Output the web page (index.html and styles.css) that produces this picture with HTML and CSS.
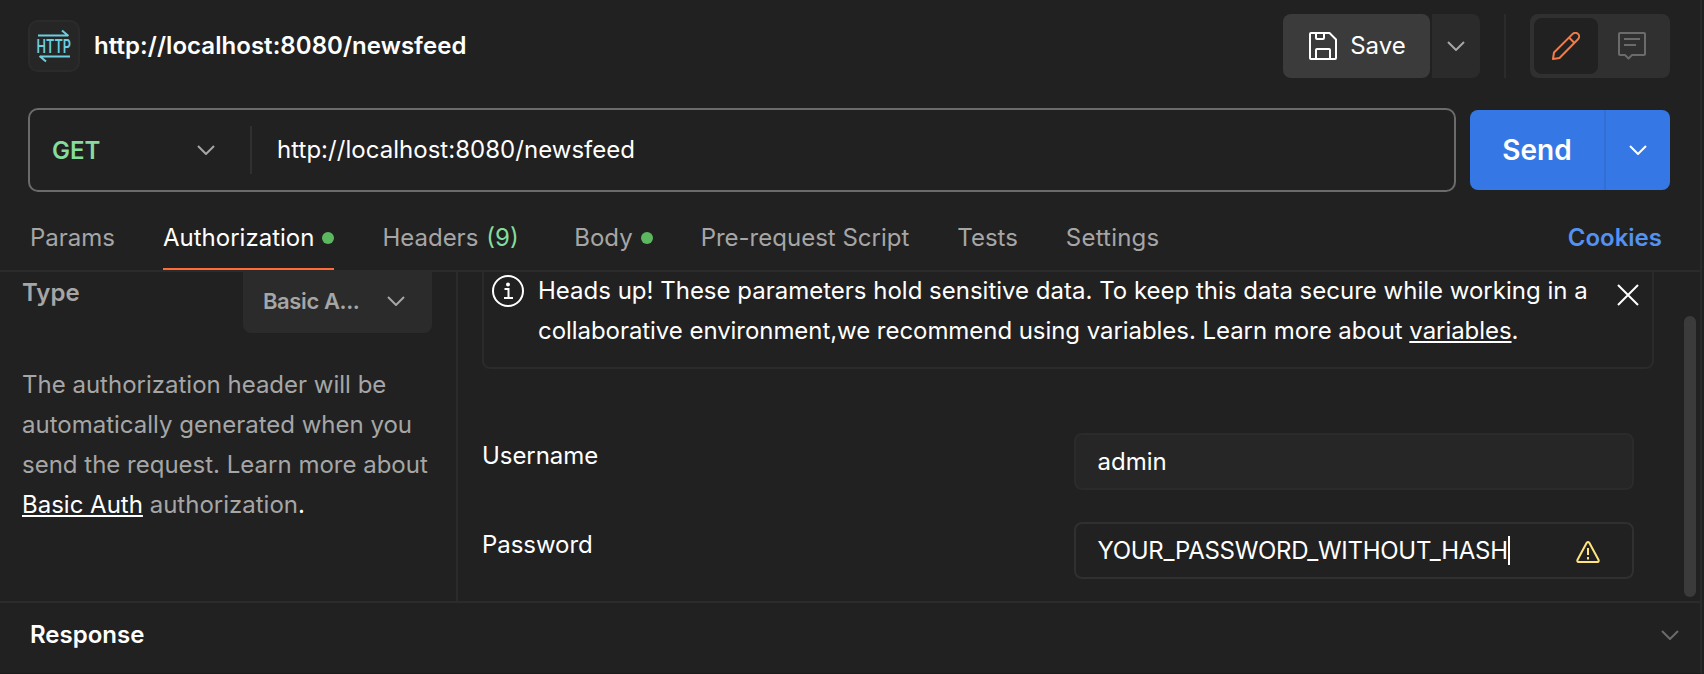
FILE: index.html
```html
<!DOCTYPE html>
<html lang="en">
<head>
<meta charset="utf-8">
<title>http://localhost:8080/newsfeed</title>
<link rel="stylesheet" href="styles.css">
</head>
<body>
<main class="app">
  <header class="header">
    <div class="http-badge">
      <svg class="http-icon" width="48" height="48" viewBox="0 0 48 48" fill="none" stroke="#6bcfe0" stroke-width="2">
        <path d="M8 13.5H38M32 8.500L38.500 14"/>
        <path d="M40 34.5H10M16 39.500L9.500 34"/>
        <text class="http-text" x="6.500" y="31" textLength="34.500" lengthAdjust="spacingAndGlyphs">HTTP</text>
      </svg>
    </div>
    <h1 class="title">http://localhost:8080/newsfeed</h1>
    <div class="save-group">
      <button class="save">
        <svg width="28" height="28" viewBox="0 0 28 28" fill="none" stroke="#fff" stroke-width="2" stroke-linejoin="round"><path d="M2 1H20.500L27 7.500V26a1 1 0 0 1-1 1H2a1 1 0 0 1-1-1V2a1 1 0 0 1 1-1ZM7 1V6a1 1 0 0 0 1 1H14a1 1 0 0 0 1-1V1M7 27V18a1 1 0 0 1 1-1H20a1 1 0 0 1 1 1V27"/></svg>
        <span class="save-label">Save</span>
      </button>
      <button class="save-more"><svg class="chev" viewBox="0 0 18 10"><path d="M1 1L9 9L17 1"/></svg></button>
    </div>
    <div class="header-divider"></div>
    <div class="toggle">
      <button class="toggle-item active">
        <svg width="28" height="28" viewBox="0 0 28 28" fill="none" stroke="#f47a46" stroke-width="2" stroke-linejoin="round"><path d="M1 27L2 20.500L20.700 1.900a3.400 3.400 0 0 1 5.300 5.300L7.500 26ZM17 5.500L22.500 11"/></svg>
      </button>
      <button class="toggle-item">
        <svg width="28" height="28" viewBox="0 0 28 28" fill="none" stroke="#6b6b6b" stroke-width="2" stroke-linejoin="round"><path d="M2 1H26a1 1 0 0 1 1 1V22a1 1 0 0 1-1 1H14L10.500 26.500L7 23H2a1 1 0 0 1-1-1V2a1 1 0 0 1 1-1ZM6 7H22M6 13H18"/></svg>
      </button>
    </div>
  </header>

  <section class="request">
    <div class="url-box">
      <div class="method"><span class="method-name">GET</span><svg class="chev" viewBox="0 0 18 10"><path d="M1 1L9 9L17 1"/></svg></div>
      <div class="url">http://localhost:8080/newsfeed</div>
    </div>
    <div class="send-group">
      <button class="send">Send</button>
      <button class="send-more"><svg class="chev" viewBox="0 0 18 10"><path d="M1 1L9 9L17 1"/></svg></button>
    </div>
  </section>

  <nav class="tabs">
    <a class="tab">Params</a>
    <a class="tab selected">Authorization<i class="dot"></i></a>
    <a class="tab">Headers <span class="count">(9)</span></a>
    <a class="tab">Body<i class="dot"></i></a>
    <a class="tab">Pre-request Script</a>
    <a class="tab">Tests</a>
    <a class="tab settings">Settings</a>
    <a class="cookies">Cookies</a>
  </nav>

  <section class="panel">
    <aside class="side">
      <div class="type-row">
        <span class="type-label">Type</span>
        <div class="select"><span class="select-value">Basic A...</span><svg class="chev" viewBox="0 0 18 10"><path d="M1 1L9 9L17 1"/></svg></div>
      </div>
      <p class="desc">The authorization header will be<br>automatically generated when you<br>send the request. Learn more about<br><a class="link">Basic Auth</a> authorization<span class="stop">.</span></p>
    </aside>
    <div class="content">
      <div class="banner">
        <svg class="info" width="32" height="32" viewBox="0 0 32 32" fill="none" stroke="#fff" stroke-width="2"><circle cx="16" cy="16" r="15"/><path d="M12.500 14H16.500V23M12 23H21"/><circle cx="16" cy="9.500" r="2" fill="#fff" stroke="none"/></svg>
        <p class="banner-text">Heads up! These parameters hold sensitive data. To keep this data secure while working in a<br><span class="tight">collaborative environment,we recommend using variables. Learn more about <a class="link">variables</a>.</span></p>
        <svg class="close" width="22" height="22" viewBox="0 0 22 22" fill="none" stroke="#fff" stroke-width="2"><path d="M1 1L21 21M21 1L1 21"/></svg>
      </div>
      <div class="field">
        <label class="label">Username</label>
        <div class="input">admin</div>
      </div>
      <div class="field">
        <label class="label">Password</label>
        <div class="input focused"><span class="pw">YOUR_PASSWORD_WITHOUT_HASH</span><i class="caret"></i>
          <svg class="warn" width="24" height="22" viewBox="0 0 24 22" fill="none" stroke="#ffe47e" stroke-width="2" stroke-linejoin="round"><path d="M10.700 1.800Q12 .200 13.300 1.800L22.600 19Q23 20.800 21.500 21H2.500Q1 20.800 1.400 19ZM12 7V14M12 16V18.500"/></svg>
        </div>
      </div>
    </div>
    <div class="scroll"><div class="thumb"></div></div>
  </section>

  <footer class="response"><span>Response</span><svg class="chev" viewBox="0 0 18 10"><path d="M1 1L9 9L17 1"/></svg></footer>
</main>
</body>
</html>
```
FILE: styles.css
```css
* { box-sizing: border-box; }
body { margin: 0; background: #212121; color: #fff; font: 400 24px/40px Inter, sans-serif; overflow: hidden; }
button { border: 0; padding: 0; margin: 0; color: inherit; font: inherit; display: flex; align-items: center; justify-content: center; }
p, h1 { margin: 0; }
svg { display: block; flex: none; }
.app { width: 1702px; height: 674px; border-right: 2px solid #2b2b2b; border-bottom: 1px solid #1a1a1a; display: flex; flex-direction: column; white-space: nowrap; }
.chev { width: 18px; height: 10px; fill: none; stroke: #a6a6a6; stroke-width: 2; }

.header { height: 92px; padding: 14px 30px 0 28px; display: flex; align-items: flex-start; }
.http-badge { width: 52px; height: 52px; margin: 6px 14px 0 0; border: 2px solid #2b2b2b; border-radius: 10px; background: #262626; }
.http-icon { overflow: visible; }
.http-text { font: 600 18px Inter, sans-serif; fill: #6bcfe0; stroke: none; }
.title { font-size: 24px; font-weight: 600; line-height: 64px; letter-spacing: 0.05px; flex: 1; }
.save-group { display: flex; gap: 2px; height: 64px; }
.save { width: 147px; gap: 13px; padding-left: 2px; background: #3b3b3b; border-radius: 8px; }
.save-more { width: 48px; background: #2b2b2b; border-radius: 0 8px 8px 0; }
.header-divider { width: 2px; height: 64px; margin: 0 24px; background: #2b2b2b; }
.toggle { width: 140px; height: 64px; padding: 4px; display: flex; gap: 2px; background: #303030; border-radius: 8px; }
.toggle-item { width: 64px; height: 56px; border-radius: 8px; background: none; }
.toggle-item.active { background: #212121; }

.request { height: 100px; padding: 16px 30px 0 28px; display: flex; gap: 14px; }
.url-box { width: 1428px; height: 84px; border: 2px solid #6b6b6b; border-radius: 10px; display: flex; align-items: center; }
.method { width: 222px; height: 48px; padding: 0 35px 0 22px; border-right: 2px solid #303030; display: flex; align-items: center; justify-content: space-between; }
.method-name { padding-top: 2px; font-weight: 600; color: #85dc9c; }
.url { padding-left: 25px; letter-spacing: 0.03px; }
.send-group { width: 200px; height: 80px; margin-top: 2px; display: flex; background: #3578e5; border-radius: 8px; }
.send { width: 134px; background: none; font-size: 28px; font-weight: 600; }
.send-more { width: 66px; background: none; border-left: 2px solid #326fd5; }
.send-more .chev { stroke: #fff; }

.tabs { height: 80px; padding: 0 38px 0 30px; border-bottom: 2px solid #2b2b2b; display: flex; gap: 48px; color: #a6a6a6; }
.tab { display: flex; align-items: center; height: 78px; padding: 14px 0 0; }
.tab.selected { color: #fff; border-bottom: 2px solid #ff6c37; padding-top: 16px; }
.tab.settings { letter-spacing: 0.2px; }
.dot { width: 12px; height: 12px; margin-left: 8px; border-radius: 50%; background: #5cb85f; }
.count { margin: 0 7.5px 0 8px; color: #85dc9c; }
.cookies { margin-left: auto; padding-top: 26px; font-weight: 600; color: #5491f0; }

.panel { height: 329px; display: flex; overflow: hidden; }
.side { width: 458px; border-right: 2px solid #2b2b2b; padding-left: 22px; }
.type-row { display: flex; height: 61px; padding-right: 24px; justify-content: space-between; }
.type-label { padding-top: 1px; font-weight: 600; color: #a6a6a6; }
.select { width: 189px; height: 61px; padding: 0 27px 4px 20px; background: #2b2b2b; border-radius: 0 0 8px 8px; display: flex; align-items: center; justify-content: space-between; }
.select-value { font-size: 22px; font-weight: 600; letter-spacing: -0.4px; color: #a6a6a6; }
.desc { margin-top: 32px; color: #a6a6a6; }
.link { color: #fff; text-decoration: underline; text-decoration-thickness: 2px; text-underline-offset: 2px; text-decoration-skip-ink: none; }
.stop { color: #fff; }
.content { width: 1196px; padding-left: 24px; }
.banner { width: 1172px; height: 97px; border: 2px solid #2b2b2b; border-top: 0; border-radius: 0 0 8px 8px; display: flex; align-items: flex-start; padding-left: 8px; }
.info { margin: 3px 14px 0 0; }
.banner-text { margin-top: -1px; width: 1079px; }
.tight { letter-spacing: -0.055px; }
.close { margin-top: 12px; }
.field { display: flex; justify-content: space-between; width: 1152px; height: 57px; margin-top: 32px; }
.banner + .field { margin-top: 64px; }
.label { line-height: 46px; letter-spacing: -0.05px; }
.input { width: 560px; height: 57px; padding: 0 32px 0 21.5px; border: 2px solid #2b2b2b; border-radius: 8px; background: #262626; display: flex; align-items: center; }
.input.focused { background: #212121; border-color: #303030; }
.pw { letter-spacing: -0.29px; }
.caret { width: 2px; height: 29px; background: #fff; }
.warn { margin: 2px 0 0 auto; }
.scroll { width: 46px; padding: 44px 4px 0 30px; }
.thumb { width: 12px; height: 281px; border-radius: 6px; background: #3b3b3b; }

.response { height: 72px; border-top: 2px solid #2b2b2b; padding: 0 21px 7px 30px; display: flex; align-items: center; justify-content: space-between; font-weight: 600; }
.response .chev { stroke: #6b6b6b; }
```
